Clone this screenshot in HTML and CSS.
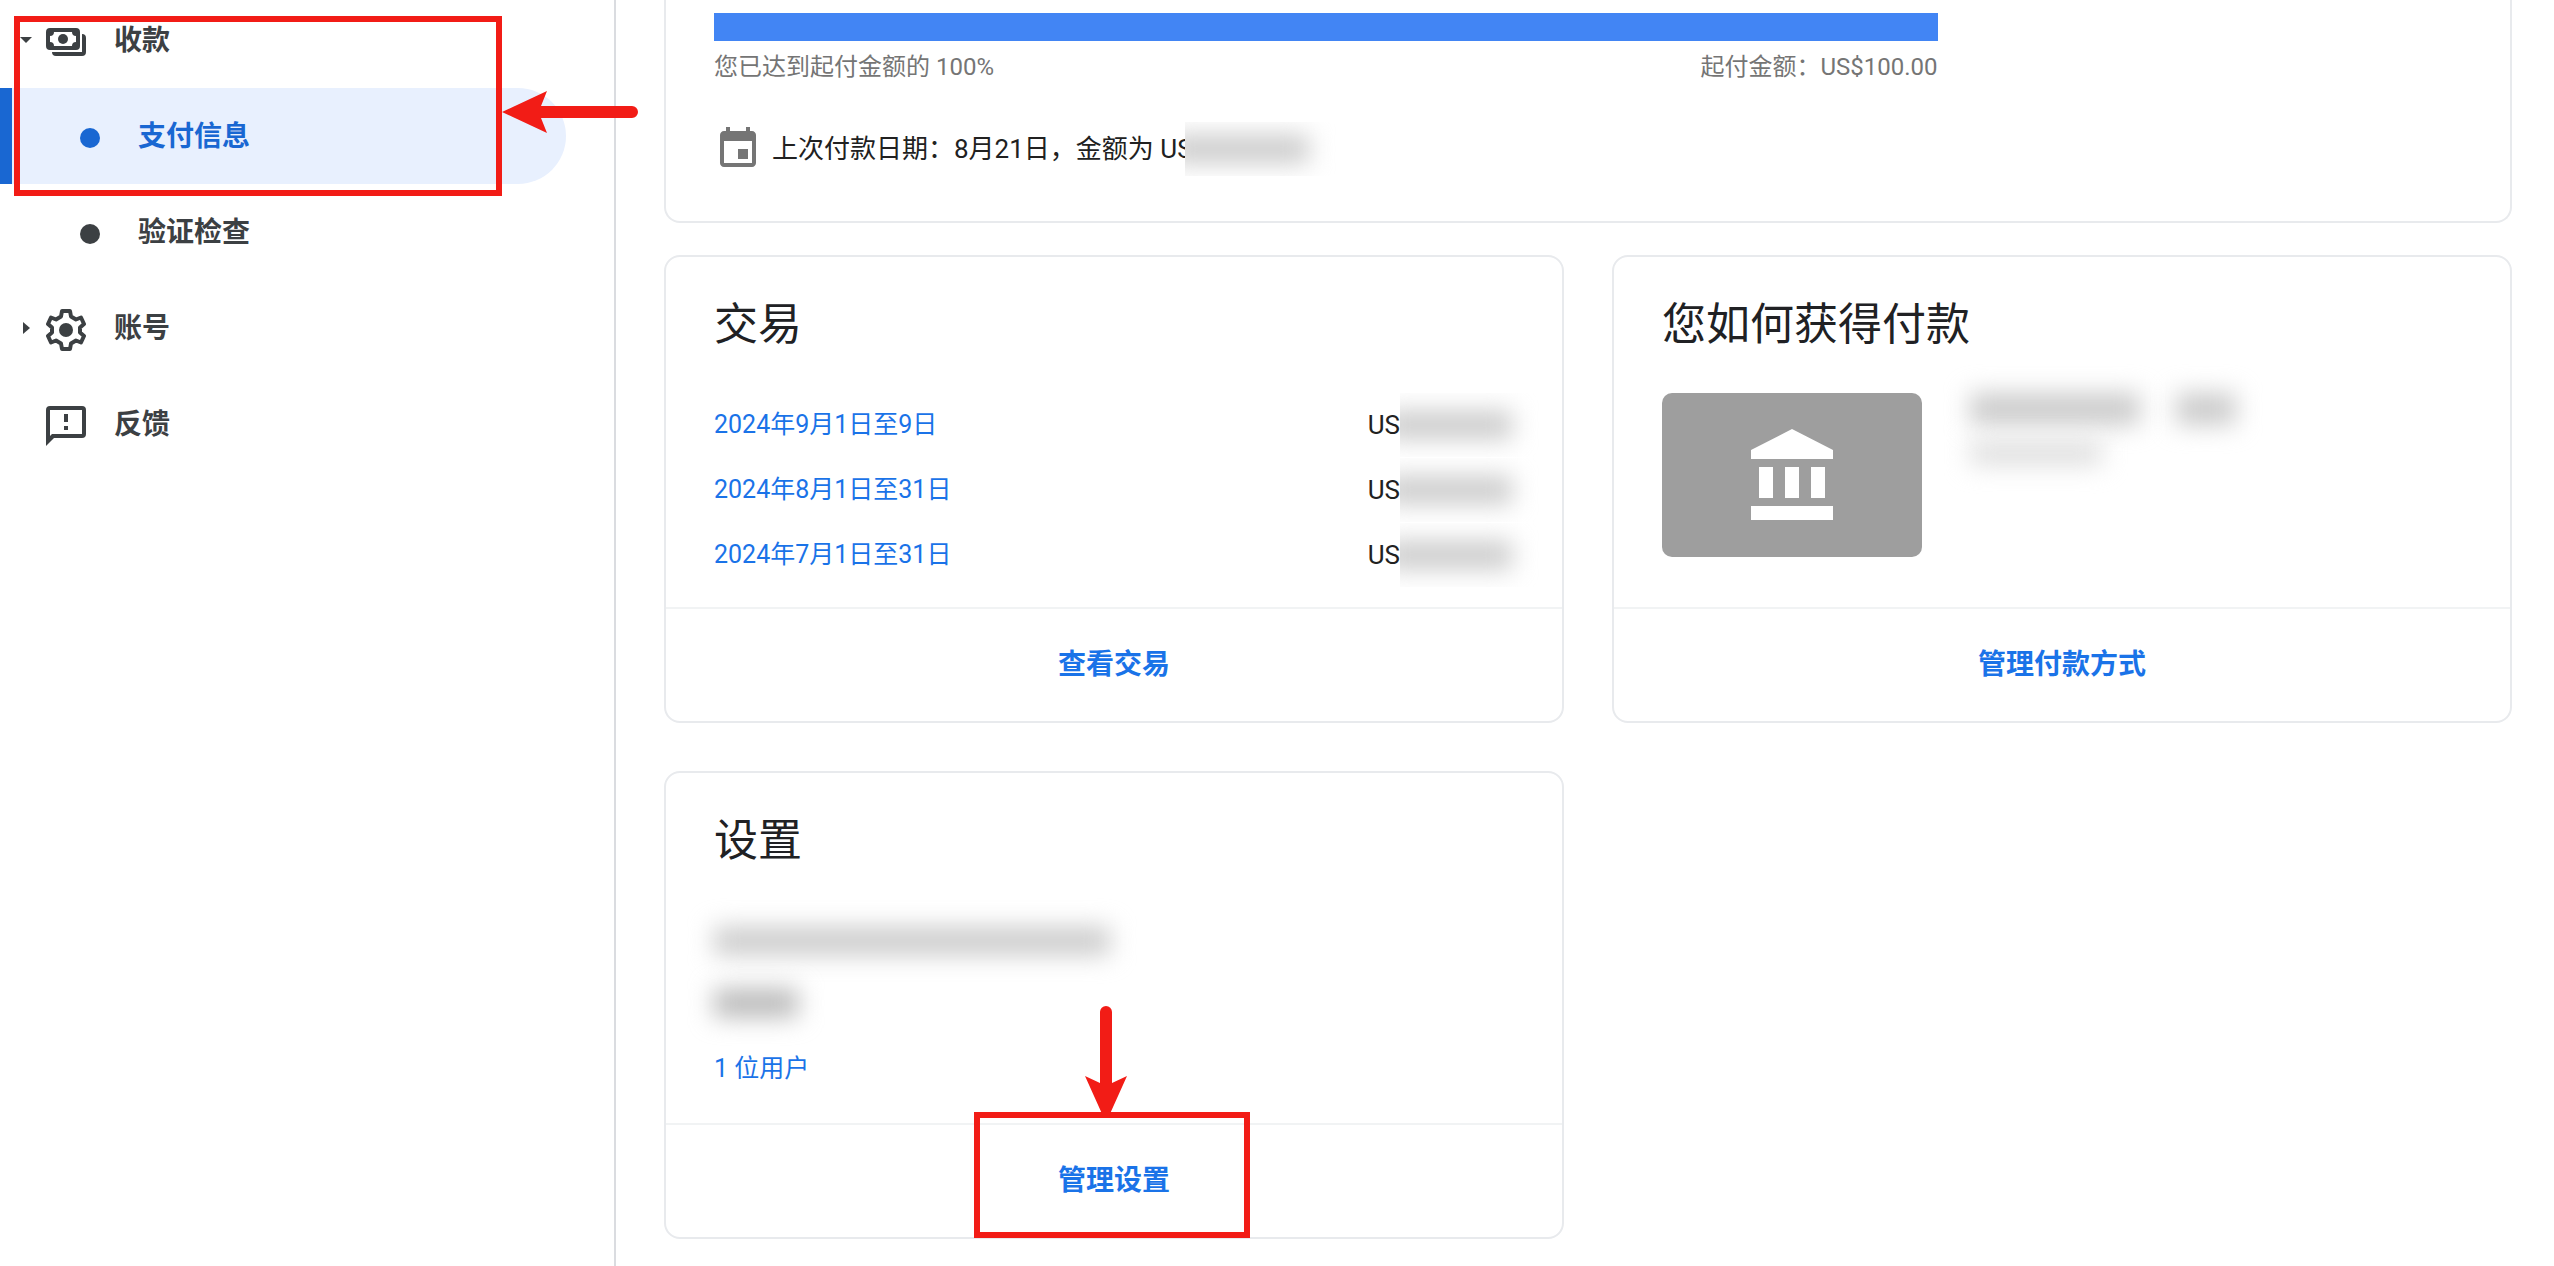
FILE: index.html
```html
<!DOCTYPE html>
<html lang="zh-CN">
<head>
<meta charset="utf-8">
<meta name="viewport" content="width=device-width, initial-scale=1">
<title>支付信息</title>
<link rel="stylesheet" href="styles.css">
</head>
<body>
<div class="layout">
  <nav class="sidebar" aria-label="主导航">
    <a class="nav-item" href="#payments">
      <svg class="caret" viewBox="0 0 12 12" aria-hidden="true"><path d="M0 3h12L6 9z"/></svg>
      <svg class="nav-icon" viewBox="0 0 40 48" aria-hidden="true"><path fill-rule="evenodd" d="M4 12h26a4 4 0 0 1 4 4v14a4 4 0 0 1-4 4H4a4 4 0 0 1-4-4V16a4 4 0 0 1 4-4zM8 16a4 4 0 0 1-4 4v6a4 4 0 0 1 4 4h18a4 4 0 0 1 4-4v-6a4 4 0 0 1-4-4z"/><circle cx="17" cy="23" r="5"/><path d="M36 18a4 4 0 0 1 4 4v14a4 4 0 0 1-4 4H10a4 4 0 0 1-4-4h30z"/></svg>
      <span class="label">收款</span>
    </a>
    <a class="nav-item nav-sub selected" href="#info" aria-current="page"><span class="dot"></span><span class="label">支付信息</span></a>
    <a class="nav-item nav-sub" href="#verify"><span class="dot"></span><span class="label">验证检查</span></a>
    <a class="nav-item" href="#account">
      <svg class="caret" viewBox="0 0 12 12" aria-hidden="true"><path d="M3 0v12l7-6z"/></svg>
      <svg class="nav-icon" viewBox="0 0 40 48" aria-hidden="true"><path fill="none" stroke="currentColor" stroke-width="4" stroke-linejoin="round" d="M16 7h8l1 5.500 5 3 5-2 3 6.500-4 3.500v5l4 3.500-3 6.500-5-2-5 3-1 5.500h-8l-1-5.500-5-3-5 2-3-6.500 4-3.500v-5l-4-3.500 3-6.500 5 2 5-3z"/><circle cx="20" cy="26" r="7"/></svg>
      <span class="label">账号</span>
    </a>
    <a class="nav-item" href="#feedback">
      <span class="caret"></span>
      <svg class="nav-icon" viewBox="0 0 40 48" aria-hidden="true"><path fill-rule="evenodd" d="M4 6h32a4 4 0 0 1 4 4v24a4 4 0 0 1-4 4H8l-8 8V10a4 4 0 0 1 4-4zM4 10v26l2-2h30V10zM18 14h4v8h-4zM18 26h4v4h-4z"/></svg>
      <span class="label">反馈</span>
    </a>
  </nav>

  <main class="content">
    <section class="card earnings">
      <div class="progress-block">
        <div class="bar"></div>
        <div class="bar-labels"><span>您已达到起付金额的 100%</span><span>起付金额：US$100.00</span></div>
      </div>
      <div class="last-payment">
        <svg class="calendar" viewBox="0 0 24 24" aria-hidden="true"><path d="M17 12h-5v5h5v-5zM16 1v2H8V1H6v2H5c-1.110 0-1.990.900-1.990 2L3 19c0 1.100.890 2 2 2h14c1.100 0 2-.900 2-2V5c0-1.100-.900-2-2-2h-1V1h-2zm3 18H5V8h14v11z"/></svg>
        <span>上次付款日期：8月21日，金额为 US</span>
        <span class="mask mask-payment"><span class="smudge"></span></span>
      </div>
    </section>

    <div class="cards">
      <section class="card">
        <div class="card-body">
          <h2>交易</h2>
          <table class="transactions">
            <tr><td><a href="#sep">2024年9月1日至9日</a></td><td><span class="amount">US<span class="mask mask-amount"><span class="smudge"></span></span></span></td></tr>
            <tr><td><a href="#aug">2024年8月1日至31日</a></td><td><span class="amount">US<span class="mask mask-amount"><span class="smudge"></span></span></span></td></tr>
            <tr><td><a href="#jul">2024年7月1日至31日</a></td><td><span class="amount">US<span class="mask mask-amount"><span class="smudge"></span></span></span></td></tr>
          </table>
        </div>
        <footer><button type="button">查看交易</button></footer>
      </section>

      <section class="card">
        <div class="card-body">
          <h2>您如何获得付款</h2>
          <div class="method">
            <div class="bank">
              <svg viewBox="0 0 82 92" aria-hidden="true"><path d="M41 0l41 21v9H0v-9zM8 38h14v31H8zM34 38h14v31H34zM60 38h14v31H60zM0 77h82v14H0z"/></svg>
            </div>
            <div>
              <div class="info-primary"><span class="smudge bank-name"></span><span class="smudge bank-number"></span></div>
              <span class="smudge bank-note"></span>
            </div>
          </div>
        </div>
        <footer><button type="button">管理付款方式</button></footer>
      </section>

      <section class="card">
        <div class="card-body">
          <h2>设置</h2>
          <div class="settings">
            <span class="smudge profile-name"></span>
            <span class="smudge profile-type"></span>
            <a href="#users">1 位用户</a>
          </div>
        </div>
        <footer><button type="button">管理设置</button></footer>
        <div class="highlight highlight-manage">
          <svg class="arrow-down" viewBox="0 0 42 110" aria-hidden="true"><path d="M15 6a6 6 0 0 1 12 0v71l15-7-18 40h-6L0 70l15 7z"/></svg>
        </div>
      </section>
    </div>
  </main>
</div>
<div class="highlight highlight-nav">
  <svg class="arrow-left" viewBox="0 0 136 42" aria-hidden="true"><path d="M0 21L45 0l-6 15h91a6 6 0 0 1 0 12H39l6 15z"/></svg>
</div>
</body>
</html>
```

FILE: styles.css
```css
* {
  box-sizing: border-box;
}

body {
  margin: 0;
  position: relative;
  background: #fff;
  color: #212121;
  font-family: Roboto, "Noto Sans CJK SC", sans-serif;
  font-size: 26px;
  line-height: 32px;
}

a {
  color: #1a73e8;
  text-decoration: none;
}

.layout {
  display: flex;
  min-height: 100vh;
}

/* Sidebar */
.sidebar {
  flex: 0 0 616px;
  border-right: 2px solid #dadce0;
  margin-top: -8px;
}

.nav-item {
  display: flex;
  align-items: center;
  height: 96px;
  padding-left: 20px;
  color: #3c4043;
  font-size: 28px;
  font-weight: 700;
}

.label {
  padding-top: 2px;
}

.caret {
  width: 12px;
  height: 12px;
  margin-right: 14px;
  fill: currentColor;
}

.nav-icon {
  width: 40px;
  height: 48px;
  margin-right: 28px;
  fill: currentColor;
}

.nav-sub {
  width: 566px;
  padding-left: 80px;
  border-radius: 0 48px 48px 0;
}

.dot {
  width: 20px;
  height: 20px;
  margin: 4px 38px 0 0;
  border-radius: 50%;
  background: currentColor;
}

.selected {
  color: #1967d2;
  background: #e8f0fe;
  border-left: 12px solid #1967d2;
  padding-left: 68px;
}

/* Content */
.content {
  flex: 1;
  padding: 0 42px 24px 48px;
}

.card {
  position: relative;
  border: 2px solid #e8eaed;
  border-radius: 16px;
}

.earnings {
  height: 223px;
  margin-bottom: 32px;
  padding: 13px 48px 0;
  border-top: 0;
  border-radius: 0 0 16px 16px;
}

.progress-block {
  width: 70%;
}

.bar {
  height: 28px;
  background: #4285f4;
}

.bar-labels {
  display: flex;
  justify-content: space-between;
  margin-top: 10px;
  color: #757575;
  font-size: 24px;
}

.last-payment {
  display: flex;
  align-items: center;
  height: 52px;
  margin-top: 40px;
}

.calendar {
  width: 48px;
  height: 48px;
  margin-right: 10px;
  fill: #757575;
}

.cards {
  display: grid;
  grid-template-columns: 1fr 1fr;
  gap: 48px;
}

.card-body {
  height: 350px;
  padding: 36px 48px 0;
}

h2 {
  margin: 0;
  color: #202124;
  font-size: 44px;
  font-weight: 400;
  line-height: 64px;
}

.card footer {
  display: flex;
  height: 114px;
  align-items: center;
  justify-content: center;
  border-top: 2px solid #f1f3f4;
}

button {
  padding: 16px;
  border: 0;
  background: none;
  color: #1a73e8;
  font: inherit;
  font-size: 28px;
  font-weight: 700;
}

.transactions {
  width: 100%;
  margin-top: 35px;
  border-collapse: collapse;
}

.transactions a,
.settings a {
  font-size: 25px;
}

.transactions td {
  height: 65px;
  padding: 0;
}

.amount {
  display: flex;
  align-items: center;
  justify-content: flex-end;
}

/* Blurred private values */
.smudge {
  display: block;
  background: #cbcbcb;
  filter: blur(12px);
}

.mask {
  display: flex;
  align-items: center;
  overflow: hidden;
}

.mask .smudge {
  margin-left: -16px;
}

.mask-payment {
  width: 160px;
  height: 54px;
  margin-left: -8px;
  background: #fff;
}

.mask-payment .smudge {
  width: 140px;
  height: 28px;
}

.mask-amount {
  width: 144px;
  height: 64px;
  margin-right: -30px;
}

.mask-amount .smudge {
  width: 128px;
  height: 28px;
}

.method {
  display: flex;
  gap: 48px;
  margin-top: 36px;
}

.bank {
  display: flex;
  align-items: center;
  justify-content: center;
  width: 260px;
  height: 164px;
  border-radius: 10px;
  background: #9e9e9e;
}

.bank svg {
  width: 82px;
  height: 92px;
  fill: #fff;
}

.info-primary {
  display: flex;
  gap: 36px;
  margin-bottom: 16px;
}

.bank-name {
  width: 170px;
  height: 32px;
}

.bank-number {
  width: 60px;
  height: 32px;
}

.bank-note {
  width: 132px;
  height: 24px;
  background: #dedede;
}

.settings {
  display: flex;
  flex-direction: column;
  align-items: flex-start;
  padding-top: 54px;
}

.profile-name {
  width: 396px;
  height: 28px;
}

.profile-type {
  width: 84px;
  height: 28px;
  margin: 34px 0 36px;
  background: #b8b8b8;
}

/* Callouts laid over the page */
.highlight {
  position: absolute;
  border: 6px solid #f21c16;
  pointer-events: none;
}

.highlight svg {
  position: absolute;
  fill: #f21c16;
}

.highlight-nav {
  left: 14px;
  top: 16px;
  width: 488px;
  height: 180px;
}

.arrow-left {
  left: calc(100% + 6px);
  top: 69px;
  width: 136px;
  height: 42px;
}

.highlight-manage {
  left: calc(50% - 140px);
  bottom: -1px;
  width: 276px;
  height: 126px;
}

.arrow-down {
  left: 105px;
  bottom: calc(100% + 2px);
  width: 42px;
  height: 110px;
}
```
